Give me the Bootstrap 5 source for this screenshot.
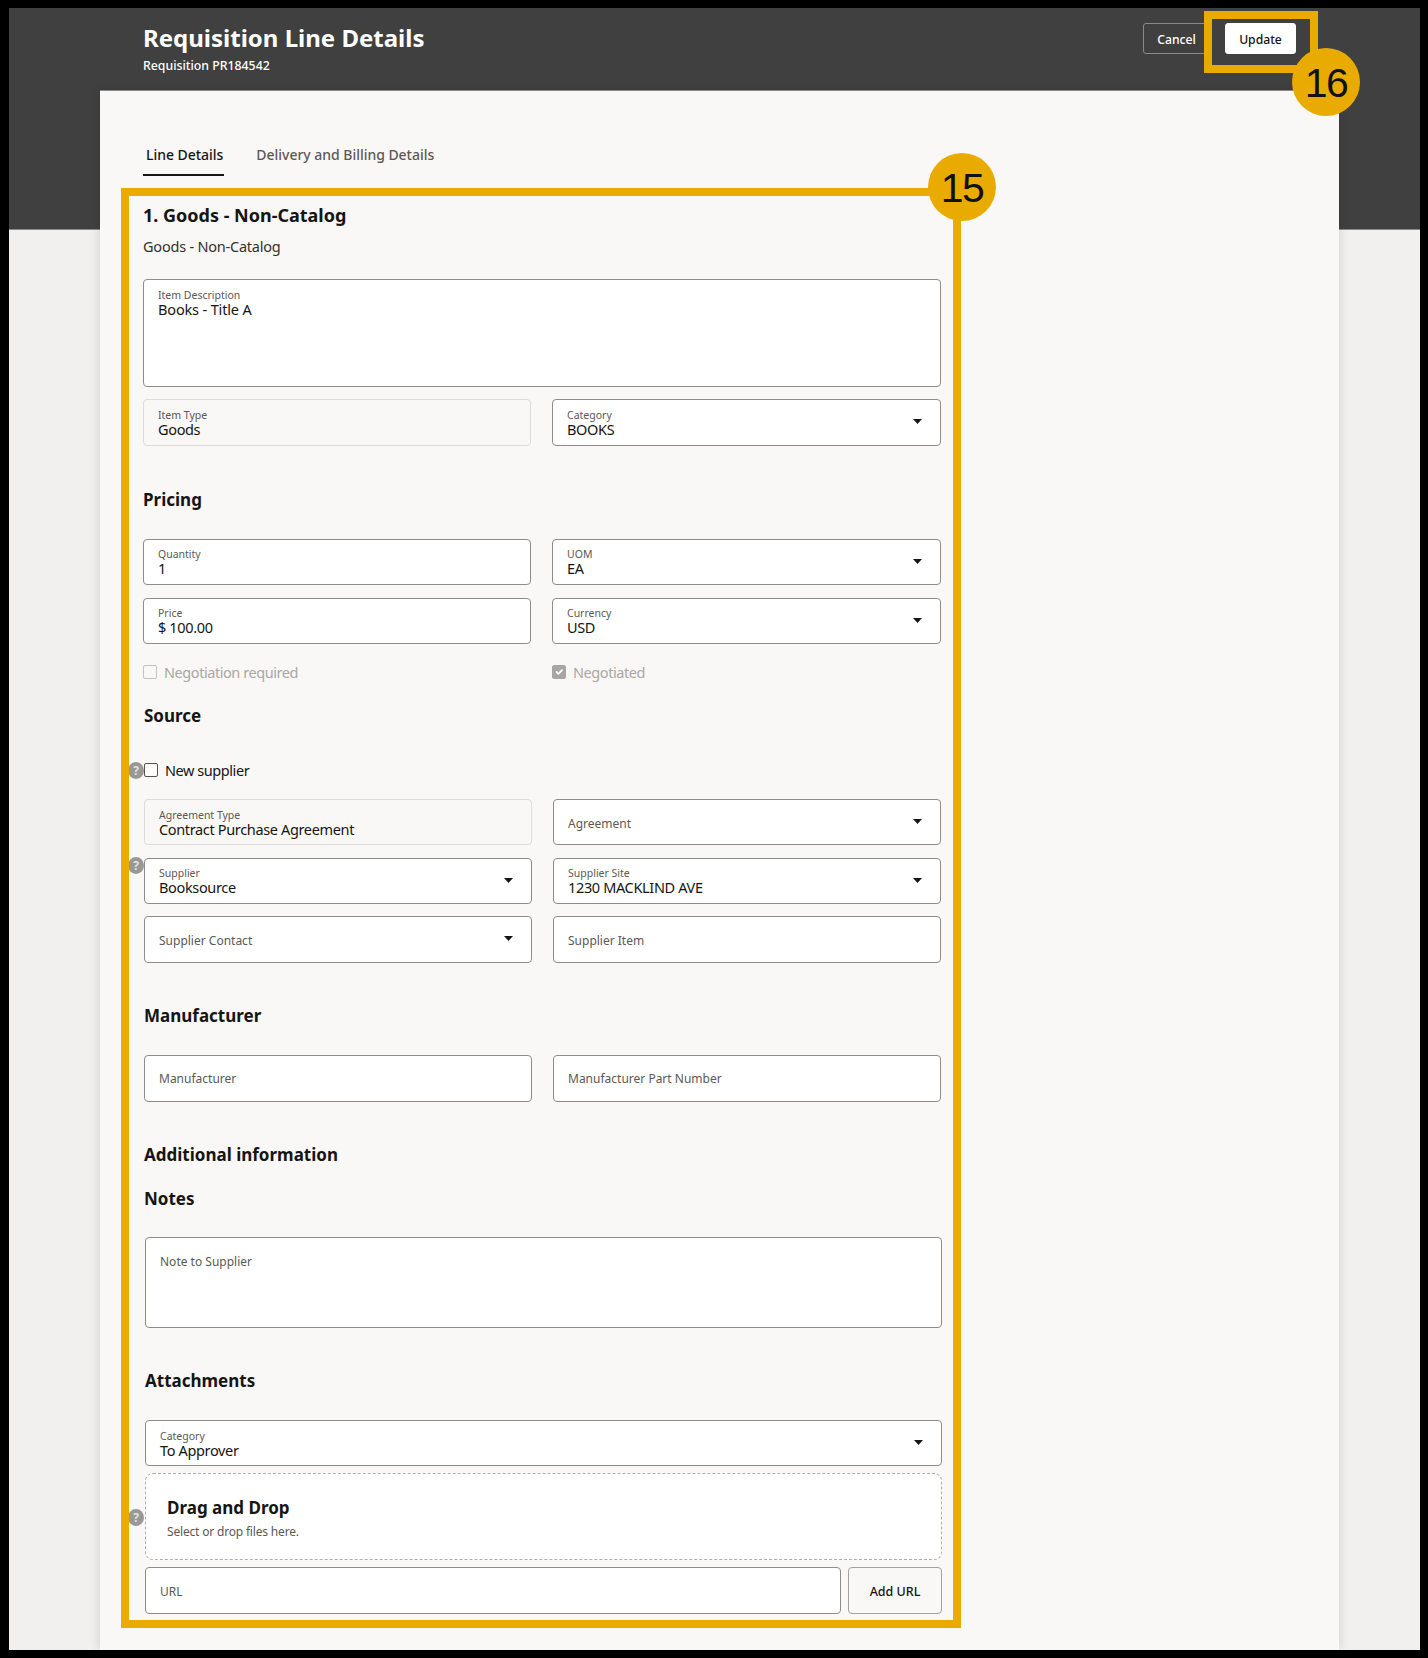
<!DOCTYPE html>
<html lang="en">
<head>
<meta charset="utf-8">
<title>Requisition Line Details</title>
<link rel="stylesheet" href="https://cdn.jsdelivr.net/npm/bootstrap@5.3.0/dist/css/bootstrap.min.css">
<style>
html,body{height:1658px;overflow:hidden}
body{background:#000;font-family:"Noto Sans","Liberation Sans",sans-serif;color:#161513;padding:8px 8px 8px 9px}
.canvas{position:relative;height:1642px;overflow:hidden;background:linear-gradient(#404040 221px,#8a8a8a 221px,#8a8a8a 222px,#f1f0ee 222px)}
.topbar{height:82px;padding:0 124px 0 134px}
.page-title{font-size:24px;line-height:30px;font-weight:700;color:#fff;margin:15px 0 0}
.page-sub{font-size:12.3px;line-height:16px;font-weight:500;color:#fff;margin-top:5px}
.bar-btn{font-size:12.2px;font-weight:500;line-height:16px;height:31px;margin-top:15px;border-radius:3px;padding:2px 0 0;text-align:center}
.btn-cancel{width:67px;border:1px solid #8a8a88;color:#fff;background:transparent}
.btn-update{width:71px;margin-left:15px;border:1px solid #fff;background:#fff;color:#161513}
.sheet{margin-left:91px;width:1239px;height:1560px;background:#f9f8f6;padding-left:43px;box-shadow:0 0 10px rgba(0,0,0,.14);border-top:1px solid #8a8a8a}
.tabs-bar{padding-top:46px;gap:29px}
.tab-item{font-size:14px;line-height:22px;padding:7px 1px 8px 3px;color:#5c5955;font-weight:500;border-bottom:2px solid transparent;letter-spacing:-.03px}
.tab-on{color:#161513;border-bottom-color:#161513}
.sect{font-size:17px;line-height:26px;font-weight:700;margin:0 0 -2px}
.sect-lead{font-size:18px;line-height:24px;margin:27px 0 0}
.sub-text{font-size:14.5px;line-height:20px;color:#33312e;letter-spacing:-.22px}
.fld{width:797px;height:46px;padding:8px 14px 0;position:relative;border:1px solid #8f8d8a;border-radius:4px;background:#fff;color:#161513}
.fld-ro{background:#f9f8f6;border-color:#dedcd9}
.pair{display:grid;grid-template-columns:388px 388px;column-gap:21px;width:797px}
.pair .fld{width:388px}
.pair-wide{grid-template-columns:388px 389px;width:798px}
.pair-wide .fld:last-child{width:389px}
.fld-wide{width:798px}
.f-label{display:block;font-size:10.5px;line-height:13px;color:#5c5955}
.f-value{display:block;font-size:14.5px;line-height:15px;color:#161513;letter-spacing:-.35px}
.f-value-loose{letter-spacing:-.15px}
.f-ph{display:block;font-size:12px;line-height:18px;padding-top:6px;color:#5c5955}
.fld-caret{position:absolute;right:18px;top:19px;width:9px;height:5px}
.shift1{margin-left:1px}
.shift2{margin-left:2px}
input.chk[type=checkbox]{width:14px;height:14px;margin:0;border:1px solid #55534f;border-radius:2px;flex:none;opacity:1}
input.chk-dim[type=checkbox]{border-color:#c4c2bf;background-color:#f9f8f6}
input.chk-on[type=checkbox]:checked{background-color:#a8a6a3;border-color:#a8a6a3}
.chk-label{font-size:14.5px;line-height:20px;letter-spacing:-.44px}
.dim-label{color:#a9a7a4}
.pick-gap{gap:7px}
.hint-dot{position:absolute;width:16px;height:17px;border-radius:50%;background:#9a9896;color:#e4e3e1;font-size:12px;line-height:17px;font-weight:700;text-align:center;letter-spacing:0}
.hold{position:relative}
.drop-zone{width:797px;height:87px;background:#fff;border:1px dashed #b0aeab;border-radius:8px;padding:22px 21px 0}
.drop-title{font-size:17px;line-height:24px;font-weight:700}
.drop-sub{font-size:12px;line-height:16px;color:#5c5955;margin-top:4px;letter-spacing:-.18px}
.url-row{width:797px;gap:7px}
.url-fld{width:696px;height:47px;padding-top:9px}
.btn-add{width:94px;height:47px;border:1px solid #a3a19e;border-radius:4px;background:#f9f8f6;color:#161513;font-size:12.5px;font-weight:500;padding:3px 0 0}
.m7{margin-top:7px}.m9{margin-top:9px}.m12{margin-top:12px}.m13{margin-top:13px}.m18{margin-top:18px}.m19{margin-top:19px}.m20{margin-top:20px}.m21{margin-top:21px}.m23{margin-top:23px}.m27{margin-top:27px}.m28{margin-top:28px}.m33{margin-top:33px}.m40{margin-top:40px}.m41{margin-top:41px}
.note-box{height:91px;padding-top:9px}
.desc-box{height:108px}
.h47{height:47px}
.pt9{padding-top:9px}
.mark-box{position:absolute;border:8px solid #eaab00;pointer-events:none}
.mark-15{left:112px;top:180px;width:840px;height:1440px}
.mark-16{left:1195px;top:3px;width:114px;height:62px}
.mark-num{position:absolute;width:68px;height:68px;border-radius:50%;background:#eaab00;color:#111;font-family:"Liberation Sans",Arial,sans-serif;font-size:41px;line-height:70px;letter-spacing:-1.5px;text-align:center}
.num-15{left:919px;top:145px}
.num-16{left:1283px;top:40px}
</style>
</head>
<body>
<div class="canvas">
  <header class="topbar d-flex justify-content-between">
    <div>
      <h1 class="page-title">Requisition Line Details</h1>
      <div class="page-sub">Requisition PR184542</div>
    </div>
    <div class="d-flex align-items-start">
      <button type="button" class="btn bar-btn btn-cancel">Cancel</button>
      <button type="button" class="btn bar-btn btn-update">Update</button>
    </div>
  </header>

  <main class="sheet">
    <nav class="nav tabs-bar">
      <a class="tab-item tab-on text-decoration-none" href="#">Line Details</a>
      <a class="tab-item text-decoration-none" href="#">Delivery and Billing Details</a>
    </nav>

    <h2 class="sect sect-lead">1. Goods - Non-Catalog</h2>
    <div class="sub-text m9">Goods - Non-Catalog</div>

    <div class="fld fld-wide desc-box pt9 m23"><span class="f-label">Item Description</span><span class="f-value f-value-loose">Books - Title A</span></div>

    <div class="pair pair-wide m12">
      <div class="fld fld-ro h47 pt9"><span class="f-label">Item Type</span><span class="f-value">Goods</span></div>
      <div class="fld h47 pt9"><span class="f-label">Category</span><span class="f-value">BOOKS</span>
        <svg class="fld-caret" viewBox="0 0 9 5"><polygon points="0,0 9,0 4.5,5" fill="#161513"/></svg></div>
    </div>

    <h3 class="sect m41">Pricing</h3>
    <div class="pair pair-wide m28">
      <div class="fld"><span class="f-label">Quantity</span><span class="f-value">1</span></div>
      <div class="fld"><span class="f-label">UOM</span><span class="f-value">EA</span>
        <svg class="fld-caret" viewBox="0 0 9 5"><polygon points="0,0 9,0 4.5,5" fill="#161513"/></svg></div>
    </div>
    <div class="pair pair-wide m13">
      <div class="fld"><span class="f-label">Price</span><span class="f-value">$ 100.00</span></div>
      <div class="fld"><span class="f-label">Currency</span><span class="f-value">USD</span>
        <svg class="fld-caret" viewBox="0 0 9 5"><polygon points="0,0 9,0 4.5,5" fill="#161513"/></svg></div>
    </div>
    <div class="pair pair-wide m18">
      <div class="d-flex align-items-center pick-gap"><input class="form-check-input chk chk-dim" type="checkbox" disabled><span class="chk-label dim-label">Negotiation required</span></div>
      <div class="d-flex align-items-center pick-gap"><input class="form-check-input chk chk-on" type="checkbox" checked disabled><span class="chk-label dim-label">Negotiated</span></div>
    </div>

    <div class="shift1">
      <h3 class="sect m21">Source</h3>
      <div class="hold d-flex align-items-center pick-gap m33">
        <span class="hint-dot" style="left:-16px;top:2px">?</span>
        <input class="form-check-input chk" type="checkbox"><span class="chk-label">New supplier</span>
      </div>
      <div class="pair m19">
        <div class="fld fld-ro pt9"><span class="f-label">Agreement Type</span><span class="f-value">Contract Purchase Agreement</span></div>
        <div class="fld pt9"><span class="f-ph">Agreement</span>
          <svg class="fld-caret" viewBox="0 0 9 5"><polygon points="0,0 9,0 4.5,5" fill="#161513"/></svg></div>
      </div>
      <div class="pair m13 hold">
        <span class="hint-dot" style="left:-16px;top:-1px">?</span>
        <div class="fld"><span class="f-label">Supplier</span><span class="f-value">Booksource</span>
          <svg class="fld-caret" viewBox="0 0 9 5"><polygon points="0,0 9,0 4.5,5" fill="#161513"/></svg></div>
        <div class="fld"><span class="f-label">Supplier Site</span><span class="f-value">1230 MACKLIND AVE</span>
          <svg class="fld-caret" viewBox="0 0 9 5"><polygon points="0,0 9,0 4.5,5" fill="#161513"/></svg></div>
      </div>
      <div class="pair m12">
        <div class="fld h47 pt9"><span class="f-ph">Supplier Contact</span>
          <svg class="fld-caret" viewBox="0 0 9 5"><polygon points="0,0 9,0 4.5,5" fill="#161513"/></svg></div>
        <div class="fld h47 pt9"><span class="f-ph">Supplier Item</span></div>
      </div>

      <h3 class="sect m40">Manufacturer</h3>
      <div class="pair m28">
        <div class="fld h47"><span class="f-ph">Manufacturer</span></div>
        <div class="fld h47"><span class="f-ph">Manufacturer Part Number</span></div>
      </div>

      <h3 class="sect m40">Additional information</h3>
      <h4 class="sect m20">Notes</h4>
    </div>

    <div class="shift2">
      <div class="fld note-box m27"><span class="f-ph">Note to Supplier</span></div>

      <h4 class="sect m40">Attachments</h4>
      <div class="fld pt9 m28"><span class="f-label">Category</span><span class="f-value">To Approver</span>
        <svg class="fld-caret" viewBox="0 0 9 5"><polygon points="0,0 9,0 4.5,5" fill="#161513"/></svg></div>
      <div class="hold m7">
        <span class="hint-dot" style="left:-17px;top:36px">?</span>
        <div class="drop-zone">
          <div class="drop-title">Drag and Drop</div>
          <div class="drop-sub">Select or drop files here.</div>
        </div>
      </div>
      <div class="d-flex url-row m7">
        <div class="fld url-fld"><span class="f-ph">URL</span></div>
        <button type="button" class="btn btn-add">Add URL</button>
      </div>
    </div>
  </main>

  <div class="mark-box mark-15"></div>
  <div class="mark-box mark-16"></div>
  <div class="mark-num num-15">15</div>
  <div class="mark-num num-16">16</div>
</div>
<script src="https://cdn.jsdelivr.net/npm/bootstrap@5.3.0/dist/js/bootstrap.bundle.min.js"></script>
</body>
</html>
